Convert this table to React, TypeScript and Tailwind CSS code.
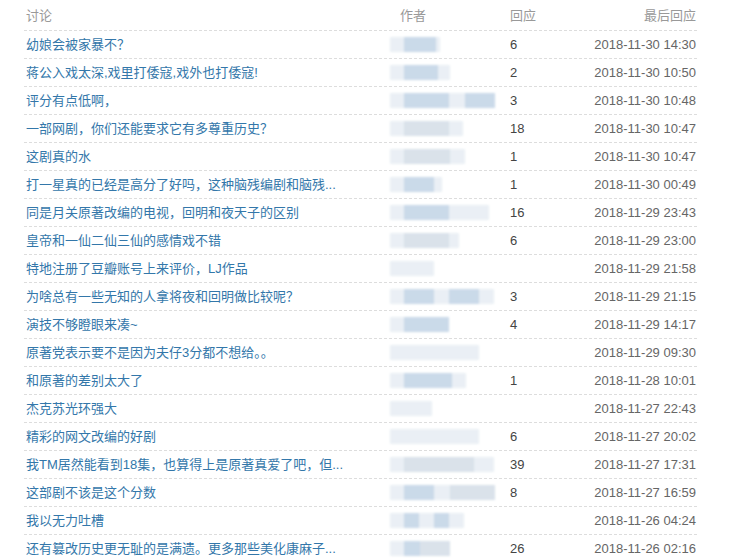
import React from 'react';

type Seg = [number, string];

interface Topic {
  title: string;
  author: Seg[];
  replies: string;
  last: string;
}

const L = '#e8eef4';
const B = '#c5d6e7';
const G = '#d6dfe8';

const topics: Topic[] = [
  { title: '幼娘会被家暴不？', author: [[14, L], [32, B], [4, L]], replies: '6', last: '2018-11-30 14:30' },
  { title: '蒋公入戏太深,戏里打倭寇,戏外也打倭寇!', author: [[14, L], [34, B], [12, L]], replies: '2', last: '2018-11-30 10:50' },
  { title: '评分有点低啊，', author: [[14, L], [45, B], [16, L], [30, B]], replies: '3', last: '2018-11-30 10:48' },
  { title: '一部网剧，你们还能要求它有多尊重历史？', author: [[14, L], [45, G], [14, L]], replies: '18', last: '2018-11-30 10:47' },
  { title: '这剧真的水', author: [[14, L], [16, G], [30, G], [15, L]], replies: '1', last: '2018-11-30 10:47' },
  { title: '打一星真的已经是高分了好吗，这种脑残编剧和脑残...', author: [[14, L], [30, B], [8, L]], replies: '1', last: '2018-11-30 00:49' },
  { title: '同是月关原著改编的电视，回明和夜天子的区别', author: [[14, L], [45, B], [10, L], [30, L]], replies: '16', last: '2018-11-29 23:43' },
  { title: '皇帝和一仙二仙三仙的感情戏不错', author: [[14, L], [45, G], [10, L]], replies: '6', last: '2018-11-29 23:00' },
  { title: '特地注册了豆瓣账号上来评价，LJ作品', author: [[14, L], [30, L]], replies: '', last: '2018-11-29 21:58' },
  { title: '为啥总有一些无知的人拿将夜和回明做比较呢？', author: [[14, L], [30, B], [15, L], [30, B], [15, L]], replies: '3', last: '2018-11-29 21:15' },
  { title: '演技不够瞪眼来凑~', author: [[14, L], [45, B]], replies: '4', last: '2018-11-29 14:17' },
  { title: '原著党表示要不是因为夫仔3分都不想给。。', author: [[14, L], [75, L]], replies: '', last: '2018-11-29 09:30' },
  { title: '和原著的差别太大了', author: [[14, L], [48, B], [14, L]], replies: '1', last: '2018-11-28 10:01' },
  { title: '杰克苏光环强大', author: [[14, L], [16, L], [12, L]], replies: '', last: '2018-11-27 22:43' },
  { title: '精彩的网文改编的好剧', author: [[14, L], [75, L]], replies: '6', last: '2018-11-27 20:02' },
  { title: '我TM居然能看到18集，也算得上是原著真爱了吧，但...', author: [[14, L], [70, G], [20, L]], replies: '39', last: '2018-11-27 17:31' },
  { title: '这部剧不该是这个分数', author: [[14, L], [30, B], [16, L], [45, G]], replies: '8', last: '2018-11-27 16:59' },
  { title: '我以无力吐槽', author: [[14, L], [15, B], [15, L], [15, B], [15, L]], replies: '', last: '2018-11-26 04:24' },
  { title: '还有篡改历史更无耻的是满遗。更多那些美化康麻子...', author: [[14, L], [16, B], [30, G]], replies: '26', last: '2018-11-26 02:16' },
];

const font = { fontFamily: '"Liberation Sans", Arial, "Noto Sans CJK SC", sans-serif' };

const Blur: React.FC<{ segs: Seg[] }> = ({ segs }) => (
  <div className="flex h-[15px] blur-[1px] opacity-90 rounded-full">
    {segs.map(([w, c], i) => (
      <span key={i} className="h-full" style={{ width: w, backgroundColor: c }} />
    ))}
  </div>
);

export default function App() {
  return (
    <div className="bg-white w-[740px] h-[560px] overflow-hidden pl-6 text-[13px]" style={font}>
      <div className="w-[673px]">
        <div className="flex h-[30px] items-center text-[#999] pt-[2px]">
          <div className="w-[366px] pl-[2px]">讨论</div>
          <div className="w-[120px] pl-[10px]">作者</div>
          <div className="w-[80px]">回应</div>
          <div className="flex-1 text-right pr-[1px]">最后回应</div>
        </div>
        {topics.map((t, i) => (
          <div
            key={i}
            className="flex h-[28px] items-center border-t border-dashed border-[#ddd]"
          >
            <div className="w-[366px] pl-[2px] text-[#37a] whitespace-nowrap overflow-hidden">
              {t.title}
            </div>
            <div className="w-[120px]">
              <Blur segs={t.author} />
            </div>
            <div className="w-[80px] text-[#444]">{t.replies}</div>
            <div className="flex-1 text-right text-[#666] pr-[1px]">{t.last}</div>
          </div>
        ))}
      </div>
    </div>
  );
}
